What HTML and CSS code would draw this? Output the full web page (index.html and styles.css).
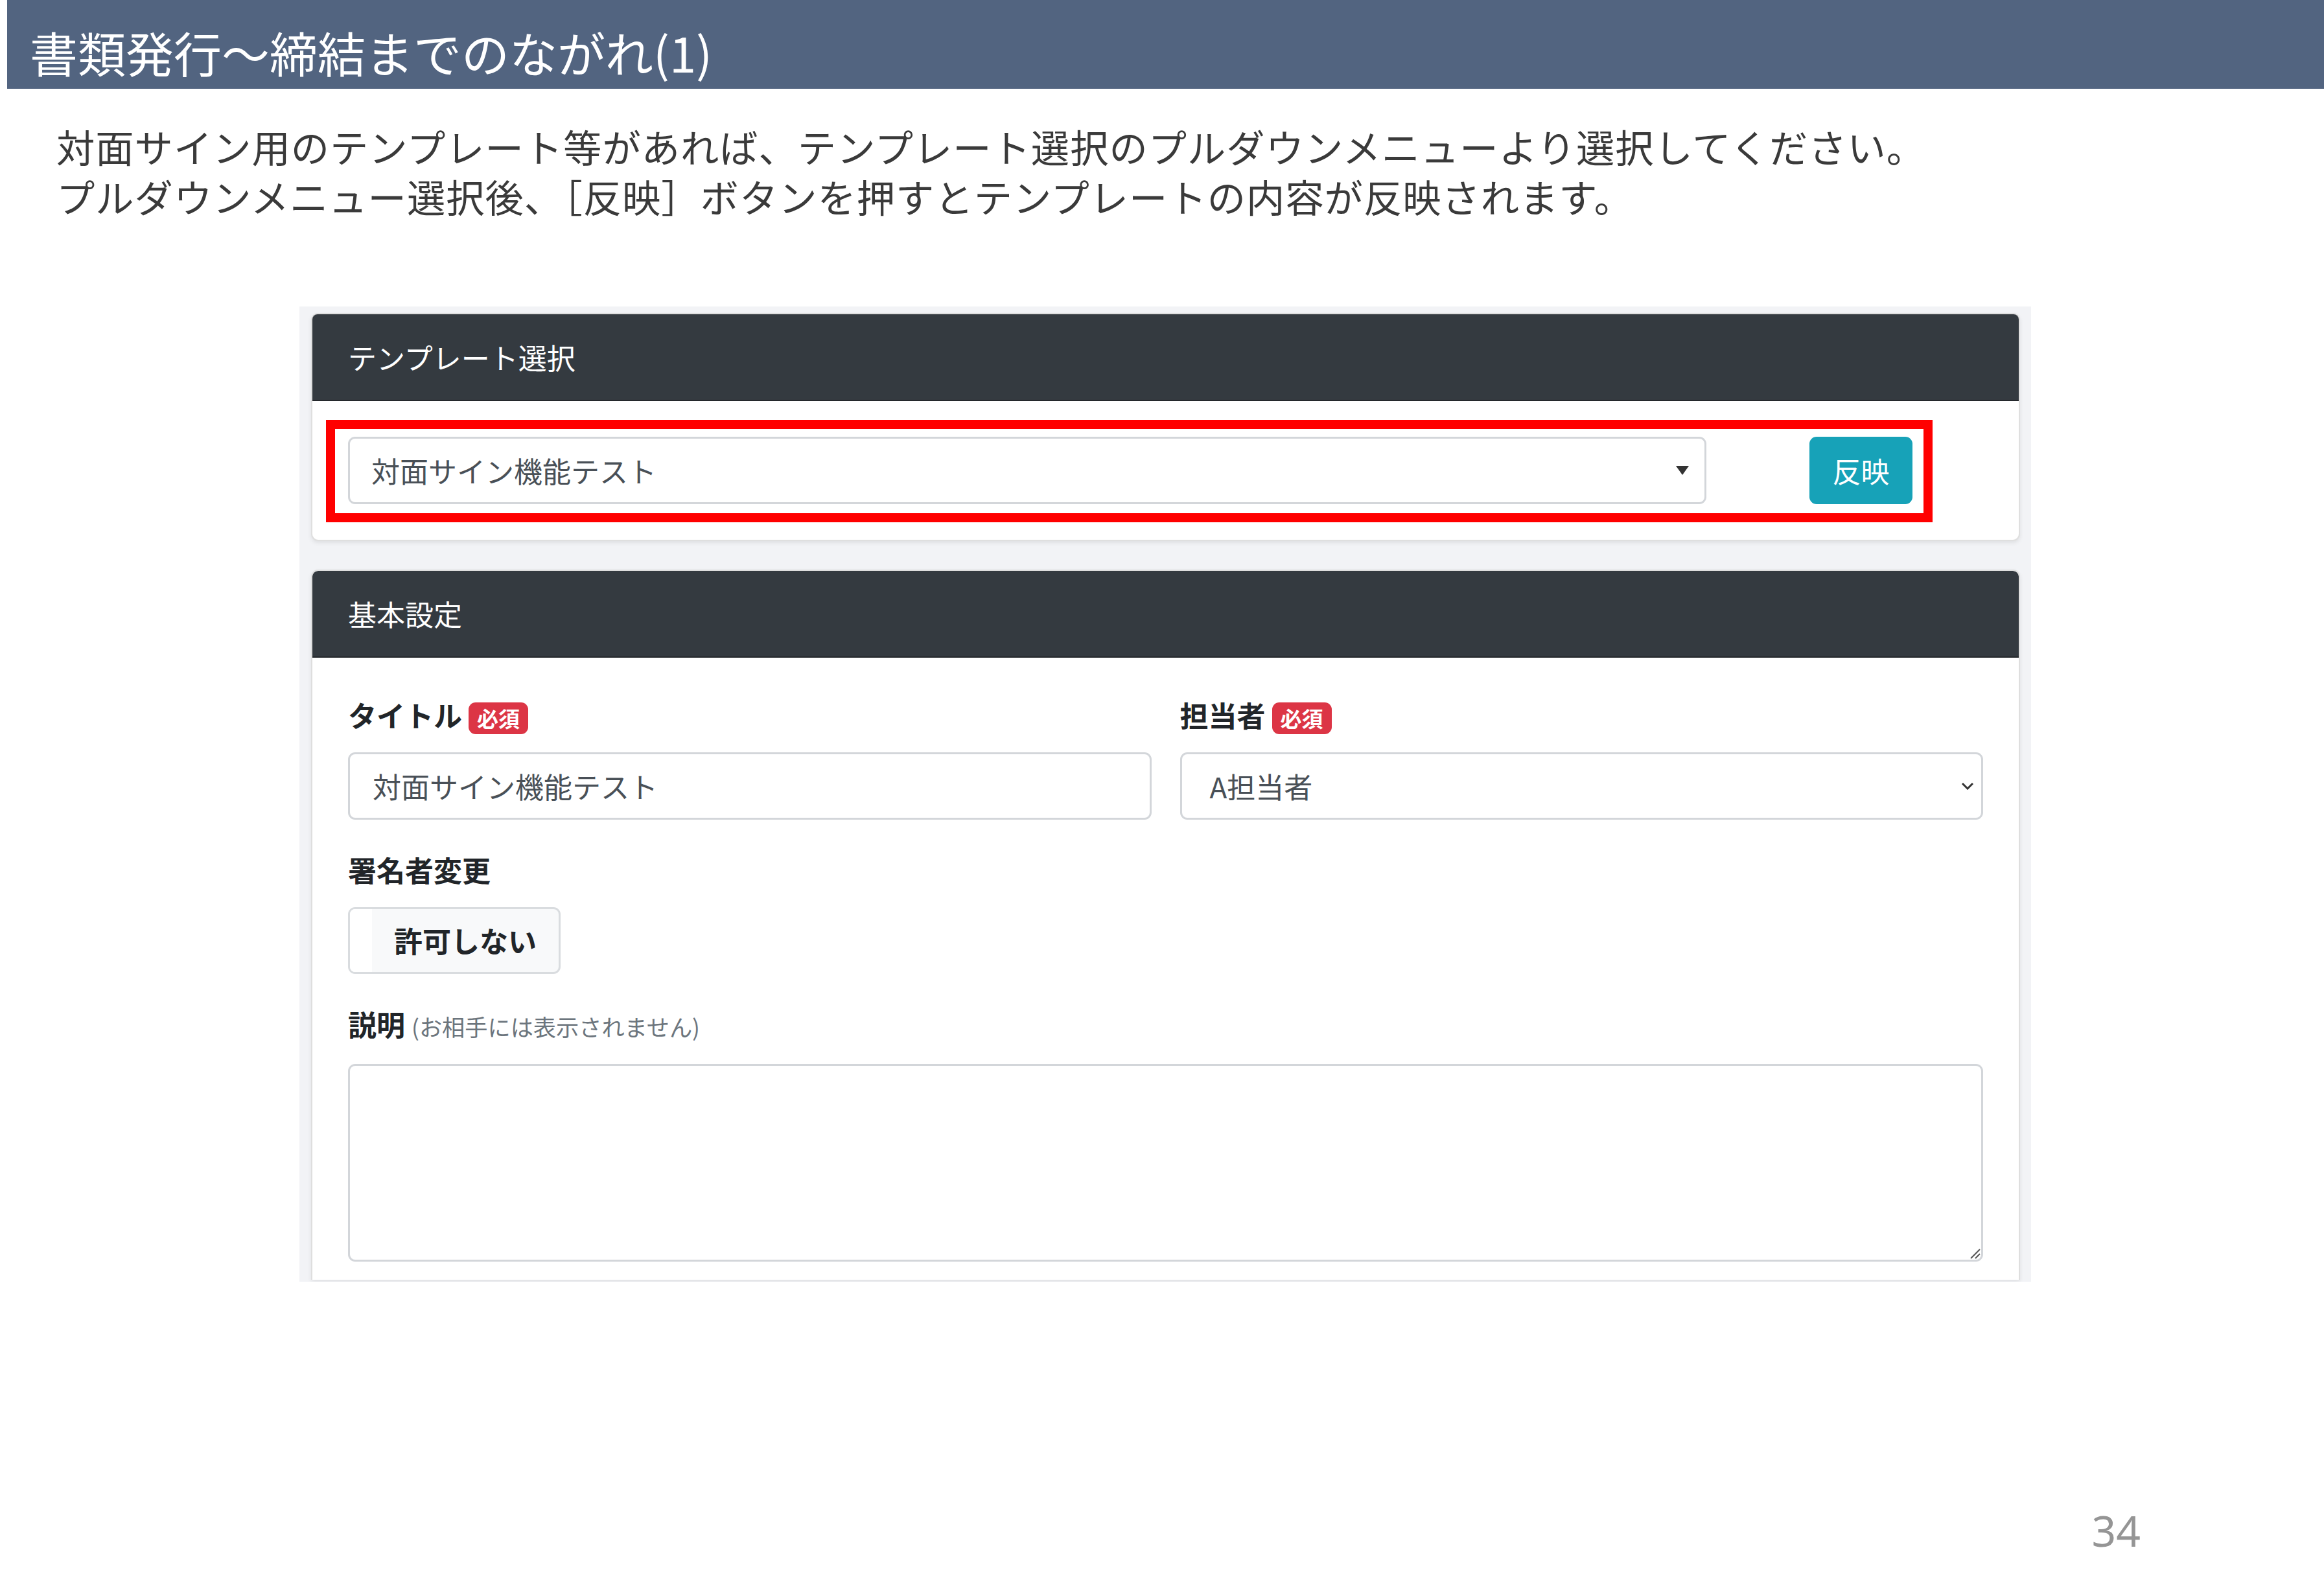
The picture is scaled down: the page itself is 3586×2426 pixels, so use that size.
FILE: index.html
```html
<!DOCTYPE html>
<html lang="ja">
<head>
    <meta charset="UTF-8">
    <title>書類発行～締結までのながれ(1)</title>
    <link rel="stylesheet" href="styles.css">
</head>
<body>
    <div class="slide">
        <header class="slide-title">
            <h1>書類発行～締結までのながれ(1)</h1>
        </header>

        <div class="intro">
            <p>対面サイン用のテンプレート等があれば、テンプレート選択のプルダウンメニューより選択してください。</p>
            <p>プルダウンメニュー選択後、［反映］ボタンを押すとテンプレートの内容が反映されます。</p>
        </div>

        <div class="shot">
            <div class="card card-template">
                <div class="card-header">テンプレート選択</div>
                <div class="card-body">
                    <div class="pick-row">
                        <div class="select-box">
                            <span>対面サイン機能テスト</span>
                            <span class="caret"></span>
                        </div>
                        <button class="btn-info">反映</button>
                        <div class="callout"></div>
                    </div>
                </div>
            </div>

            <div class="card card-basic">
                <div class="card-header">基本設定</div>
                <div class="card-body">
                    <div class="form-row">
                        <div class="form-group">
                            <label>タイトル <span class="badge">必須</span></label>
                            <div class="form-control">対面サイン機能テスト</div>
                        </div>
                        <div class="form-group">
                            <label>担当者 <span class="badge">必須</span></label>
                            <div class="form-control form-select">
                                <span>A担当者</span>
                                <svg width="20" height="12" viewBox="0 0 20 12">
                                    <path d="M2 2 L10 10 L18 2" fill="none" stroke="#333" stroke-width="3"/>
                                </svg>
                            </div>
                        </div>
                    </div>

                    <div class="form-group">
                        <label>署名者変更</label>
                        <div class="toggle">
                            <div class="toggle-handle"></div>
                            <div class="toggle-label">許可しない</div>
                        </div>
                    </div>

                    <div class="form-group">
                        <label>説明 <small class="muted">(お相手には表示されません)</small></label>
                        <div class="textarea">
                            <svg class="grip" width="20" height="20" viewBox="0 0 20 20">
                                <path d="M19 5 L5 19 M19 12 L12 19" stroke="#555" stroke-width="2"/>
                            </svg>
                        </div>
                    </div>
                </div>
            </div>
        </div>

        <div class="page-no">34</div>
    </div>
</body>
</html>
```

FILE: styles.css
```css
body {
    margin: 0;
    padding: 0;
    background-color: #fff;
    font-family: "Noto Sans CJK JP", "Noto Sans", sans-serif;
}

.slide {
    width: 3586px;
    height: 2426px;
    overflow: hidden;
}

.slide-title {
    height: 137px;
    margin-left: 11px;
    padding: 20px 0 0 35px;
    box-sizing: border-box;
    background-color: #526480;
    color: #fff;
}

.slide-title h1 {
    margin: 0;
    font-size: 74px;
    font-weight: 400;
    line-height: 120px;
}

.intro {
    margin-top: 50px;
    padding-left: 87px;
    color: #3a3a3a;
    font-size: 59.3px;
    line-height: 77px;
    letter-spacing: 1px;
}

.intro p {
    margin: 0;
}

/* app screenshot */
.shot {
    display: flex;
    flex-direction: column;
    width: 2672px;
    height: 1505px;
    margin: 132px 0 0 462px;
    padding: 10px 17px 3px 18px;
    box-sizing: border-box;
    background-color: #f2f3f6;
    overflow: hidden;
}

.card {
    background-color: #fff;
    border: 2.75px solid rgba(0,0,0,0.125);
    border-radius: 11px;
    box-shadow: 0 3px 6px rgba(0,0,0,0.08);
}

.card-template {
    flex: none;
    margin-bottom: 44px;
}

.card-basic {
    flex: 1;
    min-height: 0;
    overflow: hidden;
    border-bottom: none;
    border-radius: 11px 11px 0 0;
}

.card-header {
    padding: 33px 55px;
    background-color: #343a40;
    border-bottom: 2.75px solid rgba(0,0,0,0.3);
    border-radius: 8px 8px 0 0;
    color: #fff;
    font-size: 44px;
    line-height: 66px;
}

.card-body {
    padding: 55px;
}

.pick-row {
    position: relative;
    display: flex;
    align-items: center;
    gap: 159px;
}

.select-box {
    display: flex;
    align-items: center;
    justify-content: space-between;
    width: 2096px;
    height: 104px;
    padding: 0 24px 0 33px;
    box-sizing: border-box;
    border: 3px solid #d3d6da;
    border-radius: 11px;
    color: #495057;
    font-size: 44px;
}

.caret {
    width: 0;
    height: 0;
    border-top: 14px solid #333;
    border-left: 10px solid transparent;
    border-right: 10px solid transparent;
}

.btn-info {
    width: 159px;
    height: 104px;
    padding: 0;
    border: none;
    border-radius: 11px;
    background-color: #17a2b8;
    color: #fff;
    font-family: inherit;
    font-size: 44px;
    line-height: 104px;
}

.callout {
    position: absolute;
    left: -34px;
    top: -26px;
    width: 2479px;
    height: 158px;
    border: 14px solid #ff0000;
    box-sizing: border-box;
    pointer-events: none;
}

.form-row {
    display: grid;
    grid-template-columns: 1fr 1fr;
    column-gap: 44px;
}

.form-group {
    margin-bottom: 44px;
}

label {
    display: block;
    margin-bottom: 25px;
    color: #212529;
    font-size: 44px;
    font-weight: 700;
    line-height: 66px;
}

.badge {
    display: inline-block;
    padding: 8px 13px;
    border-radius: 11px;
    background-color: #dc3545;
    color: #fff;
    font-size: 33px;
    font-weight: 700;
    line-height: 1;
}

.muted {
    color: #6c757d;
    font-size: 35.2px;
    font-weight: 400;
}

.form-control {
    height: 104px;
    padding: 0 35px;
    box-sizing: border-box;
    border: 3px solid #d3d6da;
    border-radius: 11px;
    color: #495057;
    font-size: 44px;
    line-height: 98px;
}

.form-select {
    display: flex;
    align-items: center;
    justify-content: space-between;
    padding: 0 11px 0 43px;
}

.toggle {
    display: flex;
    width: 328px;
    height: 103px;
    box-sizing: border-box;
    border: 3px solid #d9dcdf;
    border-radius: 11px;
    background-color: #f8f9fa;
    overflow: hidden;
}

.toggle-handle {
    width: 34px;
    background-color: #fff;
}

.toggle-label {
    flex: 1;
    color: #212529;
    font-size: 44px;
    font-weight: 700;
    line-height: 97px;
    text-align: center;
}

.textarea {
    position: relative;
    height: 305px;
    box-sizing: border-box;
    border: 3px solid #d3d6da;
    border-radius: 11px;
}

.grip {
    position: absolute;
    right: 1px;
    bottom: 1px;
}

.page-no {
    margin-top: 350px;
    padding-right: 283px;
    color: #959595;
    font-family: "Noto Sans", sans-serif;
    font-size: 66px;
    line-height: 1;
    text-align: right;
}
```
